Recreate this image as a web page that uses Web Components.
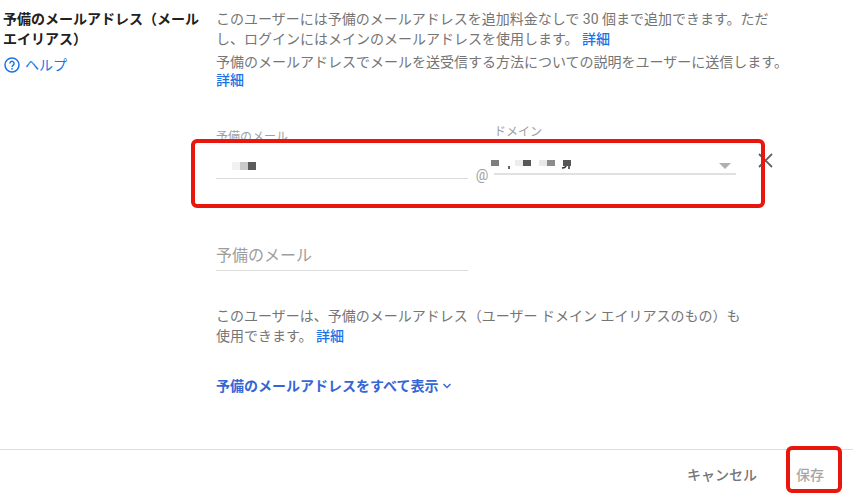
<!DOCTYPE html>
<html lang="ja">
<head>
<meta charset="utf-8">
<title>予備のメールアドレス</title>
<style>
  body {
    margin: 0;
    background: #fff;
    color: #757575;
    font: 14px/20px Roboto, "Noto Sans CJK JP", sans-serif;
  }
</style>
</head>
<body>
<alias-page></alias-page>

<script>
  // Blue inline link
  class TextLink extends HTMLElement {
    constructor() {
      super();
      this.attachShadow({ mode: 'open' });
      this.shadowRoot.innerHTML = `
        <style>
          :host { display: inline; }
          a { color: #1a73e8; font-weight: 500; text-decoration: none; }
          a:hover { text-decoration: underline; }
        </style>
        <a href="#"><slot></slot></a>
      `;
    }
  }

  // Red frame laid over the content of its positioned parent
  class HighlightFrame extends HTMLElement {
    constructor() {
      super();
      this.attachShadow({ mode: 'open' });
      this.shadowRoot.innerHTML = `
        <style>
          :host {
            position: absolute;
            box-sizing: border-box;
            border: 4px solid #e8160c;
            border-radius: 6px;
            pointer-events: none;
          }
        </style>
      `;
    }
  }

  class HelpLink extends HTMLElement {
    constructor() {
      super();
      this.attachShadow({ mode: 'open' });
      this.shadowRoot.innerHTML = `
        <style>
          :host { display: block; }
          a {
            display: inline-flex;
            align-items: center;
            gap: 5px;
            padding-left: 1px;
            color: #1a73e8;
            text-decoration: none;
          }
          svg { display: block; }
        </style>
        <a href="#">
          <svg width="16" height="16" viewBox="0 0 16 16" fill="none" stroke="currentColor" aria-hidden="true">
            <circle cx="8" cy="8" r="7" stroke-width="1.5"/>
            <path d="M5.9 6.4a2.1 2.1 0 1 1 3.3 1.7C8.4 8.7 8 9 8 9.9" stroke-width="1.4"/>
            <path d="M8 11v1.5" stroke-width="1.5"/>
          </svg>
          <span><slot></slot></span>
        </a>
      `;
    }
  }

  class AliasInput extends HTMLElement {
    connectedCallback() {
      this.attachShadow({ mode: 'open' });
      const label = this.getAttribute('label');
      const filled = this.hasAttribute('filled');
      this.shadowRoot.innerHTML = `
        <style>
          :host { display: block; position: relative; }
          label {
            display: block;
            color: #9e9e9e;
            font-size: 12px;
            line-height: 18px;
          }
          input {
            display: block;
            box-sizing: border-box;
            width: 100%;
            height: 33px;
            padding: 2px 0 0;
            border: 0;
            border-bottom: 1px solid #dcdcdc;
            border-radius: 0;
            outline: none;
            background: none;
            color: #212121;
            font: inherit;
            font-size: 16px;
          }
          input::placeholder { color: #9e9e9e; opacity: 1; }
          input:focus { border-color: #1a73e8; }
          svg { position: absolute; left: 16px; bottom: 9px; }
        </style>
        ${filled ? `<label for="mail">${label}</label>` : ''}
        <input id="mail" type="text" ${filled ? '' : `placeholder="${label}" aria-label="${label}"`}>
        ${filled ? `
          <svg width="24" height="8" shape-rendering="crispEdges" aria-hidden="true">
            <rect width="8" height="8" fill="#f2f2f2"/>
            <rect x="8" width="8" height="8" fill="#cacaca"/>
            <rect x="16" width="8" height="8" fill="#5c5c5c"/>
          </svg>` : ''}
      `;
    }
  }

  class DomainSelect extends HTMLElement {
    constructor() {
      super();
      this.attachShadow({ mode: 'open' });
      this.shadowRoot.innerHTML = `
        <style>
          :host { display: block; position: relative; }
          label {
            display: block;
            color: #9e9e9e;
            font-size: 12px;
            line-height: 18px;
          }
          select {
            display: block;
            box-sizing: border-box;
            width: 100%;
            height: 34px;
            border: 0;
            border-bottom: 2px solid #e0e0e0;
            border-radius: 0;
            outline: none;
            appearance: none;
            background: none;
            font: inherit;
          }
          svg { position: absolute; pointer-events: none; }
          .mosaic { left: -3px; bottom: 5px; }
          .arrow { right: 5px; bottom: 6px; }
        </style>
        <label for="domain">ドメイン</label>
        <select id="domain"><option></option></select>
        <svg class="mosaic" width="82" height="10" aria-hidden="true">
          <path d="M18 6v3M75 5q0 3-4 3M78 6v3" fill="none" stroke="#333" stroke-width="1.5"/>
          <g shape-rendering="crispEdges">
            <rect width="8" height="6" fill="#7e7e7e"/>
            <rect x="24" width="8" height="6" fill="#ededed"/>
            <rect x="32" width="8" height="6" fill="#575757"/>
            <rect x="48" width="8" height="6" fill="#e9e9e9"/>
            <rect x="56" width="8" height="6" fill="#8c8c8c"/>
            <rect x="72" width="8" height="6" fill="#575757"/>
          </g>
        </svg>
        <svg class="arrow" width="12" height="6" viewBox="0 0 12 6" aria-hidden="true">
          <path d="M0 0h12L6 6z" fill="#b0b0b0"/>
        </svg>
      `;
    }
  }

  class AliasRow extends HTMLElement {
    constructor() {
      super();
      this.attachShadow({ mode: 'open' });
      this.shadowRoot.innerHTML = `
        <style>
          :host { display: flex; align-items: flex-start; position: relative; max-width: 557px; }
          alias-input { flex: 252; margin-top: 5px; }
          .at {
            box-sizing: border-box;
            width: 26px;
            padding-left: 2px;
            margin-top: 42px;
            color: #9e9e9e;
            text-align: center;
          }
          domain-select { flex: 242; }
          button {
            display: block;
            margin: 30px 0 0 21px;
            padding: 0;
            border: 0;
            background: none;
            color: #616161;
            cursor: pointer;
          }
          svg { display: block; }
          highlight-frame { top: 16px; right: 8px; bottom: -23px; left: -25px; }
        </style>
        <alias-input label="予備のメール" filled></alias-input>
        <span class="at">@</span>
        <domain-select></domain-select>
        <button type="button" aria-label="削除">
          <svg width="16" height="16" viewBox="0 0 16 16" aria-hidden="true">
            <path d="M2 1l13 13M15 1L2 14" stroke="currentColor" stroke-width="1.8"/>
          </svg>
        </button>
        <highlight-frame></highlight-frame>
      `;
    }
  }

  class DialogFooter extends HTMLElement {
    constructor() {
      super();
      this.attachShadow({ mode: 'open' });
      this.shadowRoot.innerHTML = `
        <style>
          :host {
            display: flex;
            justify-content: flex-end;
            gap: 39px;
            padding: 15px 29px 9px;
            border-top: 1px solid #dcdcdc;
          }
          button {
            display: block;
            padding: 0;
            border: 0;
            background: none;
            color: #757575;
            font: inherit;
            font-weight: 500;
            cursor: pointer;
          }
          button:disabled { color: #a6a6a6; cursor: default; }
          .save { position: relative; }
          highlight-frame { top: -19px; right: -18px; bottom: -8px; left: -10px; }
        </style>
        <button type="button">キャンセル</button>
        <div class="save">
          <button type="button" disabled>保存</button>
          <highlight-frame></highlight-frame>
        </div>
      `;
    }
  }

  class AliasPage extends HTMLElement {
    constructor() {
      super();
      this.attachShadow({ mode: 'open' });
      this.shadowRoot.innerHTML = `
        <style>
          :host { display: block; }
          main {
            display: grid;
            grid-template-columns: 200px minmax(0, 576px);
            column-gap: 13px;
            padding: 9px 3px 53px;
          }
          h2 {
            margin: 0 0 6px;
            color: #212121;
            font-size: 14px;
            font-weight: 700;
          }
          p { margin: 0; }
          .send { margin-top: 4px; line-height: 18px; }
          alias-row { margin-top: 34px; }
          .new { max-width: 252px; margin-top: 53px; }
          .note { max-width: 528px; margin-top: 35px; }
          .all {
            display: flex;
            align-items: center;
            gap: 5px;
            margin-top: 30px;
            padding: 0;
            border: 0;
            background: none;
            color: #3367d6;
            font: inherit;
            font-weight: 700;
            cursor: pointer;
          }
        </style>
        <main>
          <aside>
            <h2>予備のメールアドレス（メール エイリアス）</h2>
            <help-link>ヘルプ</help-link>
          </aside>
          <section>
            <p>このユーザーには予備のメールアドレスを追加料金なしで 30 個まで追加できます。ただし、ログインにはメインのメールアドレスを使用します。 <text-link>詳細</text-link></p>
            <p class="send">予備のメールアドレスでメールを送受信する方法についての説明をユーザーに送信します。 <text-link>詳細</text-link></p>
            <alias-row></alias-row>
            <alias-input class="new" label="予備のメール"></alias-input>
            <p class="note">このユーザーは、予備のメールアドレス（ユーザー ドメイン エイリアスのもの）も使用できます。 <text-link>詳細</text-link></p>
            <button class="all" type="button">
              予備のメールアドレスをすべて表示
              <svg width="8" height="6" viewBox="0 0 8 6" aria-hidden="true">
                <path d="M0.5 1L4 4.5 7.5 1" fill="none" stroke="currentColor" stroke-width="1.5"/>
              </svg>
            </button>
          </section>
        </main>
        <dialog-footer></dialog-footer>
      `;
    }
  }

  customElements.define('text-link', TextLink);
  customElements.define('highlight-frame', HighlightFrame);
  customElements.define('help-link', HelpLink);
  customElements.define('alias-input', AliasInput);
  customElements.define('domain-select', DomainSelect);
  customElements.define('alias-row', AliasRow);
  customElements.define('dialog-footer', DialogFooter);
  customElements.define('alias-page', AliasPage);
</script>
</body>
</html>
